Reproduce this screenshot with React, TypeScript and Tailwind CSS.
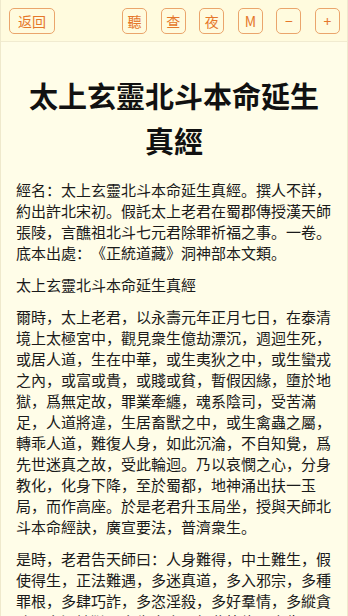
const font = { fontFamily: '"Noto Sans CJK SC", "Noto Sans CJK TC", "Noto Sans", sans-serif' }

const tools = ['聽', '查', '夜', 'M', '−', '+']

const paragraphs = [
  '經名：太上玄靈北斗本命延生真經。撰人不詳，約出許北宋初。假託太上老君在蜀郡傳授漢天師張陵，言醮祖北斗七元君除罪祈福之事。一卷。底本出處：《正統道藏》洞神部本文類。',
  '太上玄靈北斗本命延生真經',
  '爾時，太上老君，以永壽元年正月七日，在泰清境上太極宮中，觀見衆生億劫漂沉，週迴生死，或居人道，生在中華，或生夷狄之中，或生蠻戎之內，或富或貴，或賤或貧，暫假因緣，墮於地獄，爲無定故，罪業牽纏，魂系陰司，受苦滿足，人道將違，生居畜獸之中，或生禽蟲之屬，轉乖人道，難復人身，如此沉淪，不自知覺，爲先世迷真之故，受此輪迴。乃以哀憫之心，分身教化，化身下降，至於蜀都，地神涌出扶一玉局，而作高座。於是老君升玉局坐，授與天師北斗本命經訣，廣宣要法，普濟衆生。',
  '是時，老君告天師曰：人身難得，中土難生，假使得生，正法難遇，多迷真道，多入邪宗，多種罪根，多肆巧詐，多恣淫殺，多好羣情，多縱貪嗔，多沉地獄，多失人身，如此等緣，衆生不悟，不知正道，迷惑者多。',
]

function ToolButton({ label, wide }: { label: string; wide?: boolean }) {
  return (
    <button
      className={`h-[26px] ${wide ? 'w-[46px]' : 'w-[25px]'} rounded-[5px] border border-[#eaa56c] text-[14px] leading-none text-[#e5772a] flex items-center justify-center`}
    >
      {label}
    </button>
  )
}

export default function App() {
  return (
    <div className="h-[616px] overflow-hidden bg-[#fffde8] border-x border-[#efe9cc] [text-spacing-trim:space-all]" style={font}>
      <div className="h-[42px] bg-[#fffbde] border-b border-[#f1ebd0] flex items-center pl-[8px] pr-[7px]">
        <ToolButton label="返回" wide />
        <div className="ml-auto flex gap-[13.6px]">
          {tools.map((t) => (
            <ToolButton key={t} label={t} />
          ))}
        </div>
      </div>

      <div className="px-[15px] pt-[31px]">
        <h1 className="text-center text-[29px] leading-[45px] font-bold text-[#111] mb-[16px]">
          太上玄靈北斗本命延生真經
        </h1>
        {paragraphs.map((p, i) => (
          <p key={i} className="text-[15px] leading-[21px] text-[#1a1a1a] mb-[11px]">
            {p}
          </p>
        ))}
      </div>
    </div>
  )
}
